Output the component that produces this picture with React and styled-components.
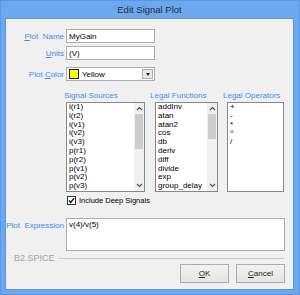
import React from 'react'
import styled, { createGlobalStyle } from 'styled-components'

const GlobalStyle = createGlobalStyle`
	html, body {
		margin: 0;
		padding: 0;
		background: #fff;
	}
	body {
		font-family: "Liberation Sans", Arial, sans-serif;
		font-size: 8px;
		color: #000;
	}
`

const Frame = styled.div`
	width: 300px;
	height: 295px;
	box-sizing: border-box;
	background: #6ba8ef;
	border: 1px solid #5b98e2;
	padding: 0 5px 4px 4px;
	display: flex;
	flex-direction: column;
`

const TitleBar = styled.div`
	height: 17px;
	display: flex;
	align-items: center;
	justify-content: center;
	font-size: 9.5px;
	color: #2b2b2b;
`

const Client = styled.div`
	flex: 1;
	background: #f0f0f0;
	border: 1px solid #5d96dc;
	display: flex;
	flex-direction: column;
	padding-top: 10px;
`

const FieldRow = styled.div`
	display: grid;
	grid-template-columns: 58px ${p => p.$width || 89}px;
	column-gap: 2px;
	align-items: ${p => p.$top ? 'start' : 'center'};
	margin-top: ${p => p.$gap || 0}px;
`

const Label = styled.label`
	color: #3d8fe6;
	text-align: right;
	white-space: pre;
	padding-top: ${p => p.$top ? 3 : 0}px;
	u {
		text-decoration: underline;
	}
`

const TextBox = styled.div`
	height: 14px;
	box-sizing: border-box;
	background: #fff;
	border: 1px solid #abadb3;
	padding: 1px 2px;
	line-height: 11px;
`

const Combo = styled.div`
	height: 14px;
	box-sizing: border-box;
	background: #fff;
	border: 1px solid #abadb3;
	display: flex;
	align-items: center;
	padding-left: 2px;
	gap: 3px;
`

const Swatch = styled.span`
	width: 8px;
	height: 8px;
	background: #ffff00;
	border: 1px solid #222;
`

const ComboText = styled.span`
	flex: 1;
`

const DropButton = styled.span`
	width: 11px;
	height: 10px;
	margin-right: 1px;
	box-sizing: border-box;
	background: #e8e8e8;
	border: 1px solid #acacac;
	display: flex;
	align-items: center;
	justify-content: center;
	&::after {
		content: '';
		border-left: 2.5px solid transparent;
		border-right: 2.5px solid transparent;
		border-top: 3px solid #222;
	}
`

const ListsRow = styled.div`
	display: flex;
	margin-top: 10px;
	margin-left: 58px;
`

const Column = styled.div`
	display: flex;
	flex-direction: column;
	margin-left: ${p => p.$gap || 0}px;
`

const ColumnTitle = styled.div`
	color: #3d8fe6;
	height: 10px;
	line-height: 10px;
	margin-bottom: 1px;
	white-space: nowrap;
`

const ListBox = styled.div`
	width: ${p => p.$width}px;
	height: 90px;
	margin-left: ${p => p.$indent}px;
	box-sizing: border-box;
	background: #fff;
	border: 1px solid #828790;
	display: flex;
	overflow: hidden;
`

const Items = styled.div`
	flex: 1;
	padding-left: 2px;
	overflow: hidden;
`

const Item = styled.div`
	height: 8.8px;
	line-height: 8.8px;
	white-space: nowrap;
`

const ScrollBar = styled.div`
	width: 10px;
	background: #f0f0f0;
	display: flex;
	flex-direction: column;
`

const ScrollArrow = styled.div`
	height: 11px;
	display: flex;
	align-items: center;
	justify-content: center;
`

const Track = styled.div`
	flex: 1;
	display: flex;
	flex-direction: column;
`

const Thumb = styled.div`
	height: ${p => p.$size}px;
	background: #cdcdcd;
	margin: 0 1px;
`

const CheckRow = styled.label`
	display: flex;
	align-items: center;
	gap: 3px;
	height: 9px;
	margin: 4px 0 0 61px;
	font-size: 7.5px;
`

const CheckBox = styled.span`
	width: 9px;
	height: 9px;
	box-sizing: border-box;
	background: #fff;
	border: 1px solid #333;
	display: flex;
	align-items: center;
	justify-content: center;
`

const ExprBox = styled.div`
	height: 33px;
	box-sizing: border-box;
	background: #fff;
	border: 1px solid #abadb3;
	padding: 1px 2px;
	line-height: 10px;
`

const GroupLine = styled.div`
	display: flex;
	align-items: center;
	gap: 4px;
	height: 10px;
	line-height: 10px;
	margin: 2px 9px 0 8px;
	color: #a2a2a2;
	font-size: 9px;
	&::after {
		content: '';
		flex: 1;
		height: 1px;
		background: #c8c8c8;
	}
`

const Buttons = styled.div`
	display: flex;
	justify-content: flex-end;
	gap: 7px;
	margin: 1px 8px 0 0;
`

const Button = styled.button`
	width: ${p => p.$width || 49}px;
	height: 19px;
	box-sizing: border-box;
	font-family: inherit;
	font-size: 8px;
	color: #222;
	background: linear-gradient(#f2f2f2, #e5e5e5);
	border: 1px solid #acacac;
	padding: 0;
`

const Chevron = ({ up }) => (
	<svg width="7" height="5" viewBox="0 0 7 5">
		<path d={up ? 'M1 4 L3.5 1.5 L6 4' : 'M1 1 L3.5 3.5 L6 1'} fill="none" stroke="#555" strokeWidth="1.2" />
	</svg>
)

const List = ({ width, indent, items, thumb }) => (
	<ListBox $width={width} $indent={indent}>
		<Items>
			{items.map(i => <Item key={i}>{i}</Item>)}
		</Items>
		{thumb && (
			<ScrollBar>
				<ScrollArrow><Chevron up /></ScrollArrow>
				<Track><Thumb $size={thumb} /></Track>
				<ScrollArrow><Chevron /></ScrollArrow>
			</ScrollBar>
		)}
	</ListBox>
)

const sources = ['i(r1)', 'i(r2)', 'i(v1)', 'i(v2)', 'i(v3)', 'p(r1)', 'p(r2)', 'p(v1)', 'p(v2)', 'p(v3)']
const functions = ['addInv', 'atan', 'atan2', 'cos', 'db', 'deriv', 'diff', 'divide', 'exp', 'group_delay']
const operators = ['+', '-', '*', '^', '/']

export default function App() {
	return (
		<>
			<GlobalStyle />
			<Frame>
				<TitleBar>Edit Signal Plot</TitleBar>
				<Client>
					<FieldRow>
						<Label><u>P</u>lot  Name</Label>
						<TextBox>MyGain</TextBox>
					</FieldRow>
					<FieldRow $gap={3}>
						<Label><u>U</u>nits</Label>
						<TextBox>(V)</TextBox>
					</FieldRow>
					<FieldRow $gap={7}>
						<Label>Plot <u>C</u>olor</Label>
						<Combo>
							<Swatch />
							<ComboText>Yellow</ComboText>
							<DropButton />
						</Combo>
					</FieldRow>
					<ListsRow>
						<Column>
							<ColumnTitle>Signal Sources</ColumnTitle>
							<List width={79} indent={2} items={sources} thumb={35} />
						</Column>
						<Column $gap={5}>
							<ColumnTitle>Legal Functions</ColumnTitle>
							<List width={63} indent={5} items={functions} thumb={25} />
						</Column>
						<Column $gap={5}>
							<ColumnTitle>Legal Operators</ColumnTitle>
							<List width={57} indent={4} items={operators} />
						</Column>
					</ListsRow>
					<CheckRow>
						<CheckBox>
							<svg width="7" height="7" viewBox="0 0 7 7">
								<path d="M1 3.5 L2.8 5.5 L6 1.2" fill="none" stroke="#111" strokeWidth="1.4" />
							</svg>
						</CheckBox>
						Include Deep Signals
					</CheckRow>
					<FieldRow $gap={13} $width={219} $top>
						<Label $top>Plot  Expression</Label>
						<ExprBox>v(4)/v(5)</ExprBox>
					</FieldRow>
					<GroupLine>B2.SPICE</GroupLine>
					<Buttons>
						<Button><u>O</u>K</Button>
						<Button><u>C</u>ancel</Button>
					</Buttons>
				</Client>
			</Frame>
		</>
	)
}
